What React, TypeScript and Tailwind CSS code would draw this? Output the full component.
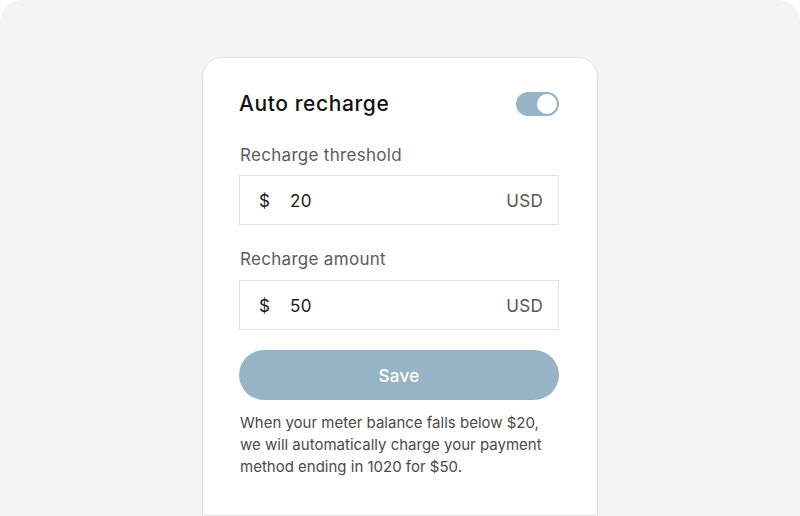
import React from "react";

export default function App() {
  return (
    <div className="w-[800px] h-[516px] bg-white overflow-hidden" style={{ fontFamily: "Inter, 'Noto Sans', sans-serif" }}>
      <div className="w-full h-full bg-[#f4f4f4] rounded-t-[22px] flex justify-center pt-[57px]">
        <div className="w-[396px] h-[459px] bg-white border border-[#e3e3e3] rounded-t-[20px] pl-[36px] pr-[38px] pt-[32px] flex flex-col">
          <div className="flex items-center justify-between h-[28px]">
            <span className="text-[21px] font-medium text-[#111] tracking-[0.6px]">Auto recharge</span>
            <div className="w-[43px] h-[24px] rounded-full bg-[#97b4c6] flex items-center justify-end pr-[2px]">
              <div className="w-[20px] h-[20px] rounded-full bg-white" />
            </div>
          </div>
          <div className="mt-[25px] pl-[1px] text-[17px] leading-[24px] text-[#5c5c5c] tracking-[0.3px]">Recharge threshold</div>
          <div className="mt-[8px] h-[50px] border border-[#e3e3e3] flex items-center pt-[3px] pl-[19px] pr-[15px] text-[17px] text-[#1a1a1a] tracking-[0.3px]">
            <span className="w-[31px]">$</span>
            <span className="flex-1">20</span>
            <span className="text-[#555]">USD</span>
          </div>
          <div className="mt-[22px] pl-[1px] text-[17px] leading-[24px] text-[#5c5c5c] tracking-[0.3px]">Recharge amount</div>
          <div className="mt-[9px] h-[50px] border border-[#e3e3e3] flex items-center pt-[3px] pl-[19px] pr-[15px] text-[17px] text-[#1a1a1a] tracking-[0.3px]">
            <span className="w-[31px]">$</span>
            <span className="flex-1">50</span>
            <span className="text-[#555]">USD</span>
          </div>
          <button className="mt-[20px] h-[50px] rounded-full bg-[#97b4c6] text-white text-[17px] font-medium pt-[4px] tracking-[0.3px]">Save</button>
          <p className="mt-[12px] pl-[1px] text-[15px] leading-[22px] text-[#4a4a4a]">
            When your meter balance falls below $20, we will automatically charge your payment method ending in 1020 for $50.
          </p>
        </div>
      </div>
    </div>
  );
}
